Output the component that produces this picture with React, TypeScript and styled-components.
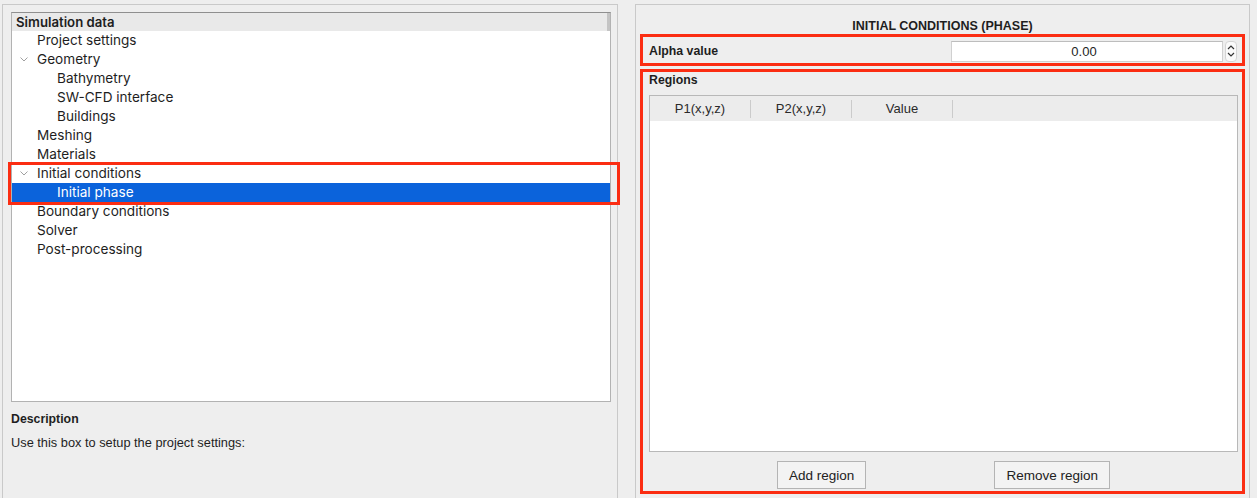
import styled, { createGlobalStyle } from "styled-components";

const GlobalStyle = createGlobalStyle`
  html, body {
    margin: 0;
    height: 498px;
    overflow: hidden;
    background: #eeeeee;
    font-family: "Liberation Sans", Arial, sans-serif;
    color: #1e1e1e;
  }
`;

const Page = styled.div`
  display: flex;
  gap: 17px;
  padding: 4px 0 0 2px;
`;

const LeftPanel = styled.div`
  width: 616px;
  height: 510px;
  box-sizing: border-box;
  border: 1px solid #c9c9c9;
  padding: 7px 6px 0 8px;
`;

const RightPanel = styled.div`
  width: 615px;
  height: 510px;
  box-sizing: border-box;
  border: 1px solid #c9c9c9;
  padding: 13px 4px 0 4px;
  display: flex;
  flex-direction: column;
`;

const TreeBox = styled.div`
  height: 390px;
  box-sizing: border-box;
  background: #ffffff;
  border: 1px solid #b2b2b2;
  border-top-color: #8f8f8f;
  font-family: Inter, "Liberation Sans", sans-serif;
  font-size: 13.6px;
`;

const TreeHeader = styled.div`
  height: 18px;
  line-height: 18px;
  padding-left: 4px;
  background: #e9e9e9;
  font-weight: 600;
  font-size: 13.2px;
  border-right: 3px solid #c4c4c4;
`;

const Row = styled.div<{ level: number; selected?: boolean }>`
  position: relative;
  height: 19px;
  line-height: 19px;
  padding-left: ${({ level }) => (level === 1 ? 25 : 45)}px;
  background: ${({ selected }) => (selected ? "#0b63db" : "transparent")};
  color: ${({ selected }) => (selected ? "#ffffff" : "#1e1e1e")};
`;

const Chevron = styled.svg`
  position: absolute;
  left: 8px;
  top: 7px;
`;

const Highlight = styled.div`
  position: relative;
  &::after {
    content: "";
    position: absolute;
    left: -4px;
    right: -10px;
    top: -2px;
    bottom: -3px;
    border: 3px solid #fb2d12;
    pointer-events: none;
  }
`;

const SectionTitle = styled.div`
  font-size: 12.3px;
  font-weight: bold;
  line-height: 15px;
`;

const RegionsTitle = styled(SectionTitle)`
  margin-top: 1px;
`;

const DescTitle = styled(SectionTitle)`
  margin-top: 10px;
`;

const DescText = styled.div`
  font-size: 12.8px;
  margin-top: 8px;
`;

const PanelTitle = styled.div`
  text-align: center;
  font-size: 12.5px;
  font-weight: bold;
  line-height: 16px;
`;

const RedBox = styled.div`
  box-sizing: border-box;
  border: 3px solid #fb2d12;
`;

const AlphaRow = styled(RedBox)`
  height: 32px;
  display: flex;
  align-items: center;
  padding: 2px 5px 0 6px;
`;

const Label = styled.div`
  flex: 1;
  font-size: 12.3px;
  font-weight: bold;
`;

const SpinInput = styled.div`
  width: 272px;
  height: 21px;
  box-sizing: border-box;
  background: #ffffff;
  border: 1px solid #d0d0d0;
  border-top-color: #bdbdbd;
  text-align: center;
  line-height: 20px;
  font-size: 13px;
  text-indent: -6px;
`;

const SpinButtons = styled.div`
  width: 12px;
  height: 21px;
  margin-left: 2px;
  box-sizing: border-box;
  border: 1px solid #d4d4d4;
  border-radius: 4px;
  background: #fafafa;
  display: flex;
  align-items: center;
  justify-content: center;
`;

const RegionsBox = styled(RedBox)`
  margin-top: 3px;
  height: 425px;
  display: flex;
  flex-direction: column;
  padding: 0 4px 0 6px;
`;

const Table = styled.div`
  margin-top: 7px;
  height: 357px;
  box-sizing: border-box;
  background: #ffffff;
  border: 1px solid #b8b8b8;
`;

const TableHead = styled.div`
  display: flex;
  height: 25px;
  background: #ececec;
  align-items: center;
`;

const HeadCell = styled.div`
  width: 100px;
  height: 18px;
  line-height: 17px;
  text-align: center;
  font-size: 13px;
  border-right: 1px solid #cbcbcb;
  color: #2a2a2a;
`;

const ButtonRow = styled.div`
  display: flex;
  justify-content: space-evenly;
  margin-top: 9px;
`;

const Button = styled.button`
  height: 28px;
  padding: 0 11px;
  font-family: "Liberation Sans", Arial, sans-serif;
  font-size: 13.5px;
  color: #222222;
  background: #f3f3f3;
  border: 1px solid #b4b4b4;
  border-radius: 0;
`;

const ChevronDown = () => (
  <Chevron width="8" height="5" viewBox="0 0 8 5">
    <path d="M0.5 0.5 L4 4 L7.5 0.5" fill="none" stroke="#a0a0a0" strokeWidth="1" />
  </Chevron>
);

const SpinIcon = () => (
  <svg width="8" height="16" viewBox="0 0 8 16">
    <path d="M1 6 L4 3 L7 6" fill="none" stroke="#333" strokeWidth="1.2" />
    <path d="M1 10 L4 13 L7 10" fill="none" stroke="#333" strokeWidth="1.2" />
  </svg>
);

const App = () => {
  return (
    <>
      <GlobalStyle />
      <Page>
        <LeftPanel>
          <TreeBox>
            <TreeHeader>Simulation data</TreeHeader>
            <Row level={1}>Project settings</Row>
            <Row level={1}>
              <ChevronDown />
              Geometry
            </Row>
            <Row level={2}>Bathymetry</Row>
            <Row level={2}>SW-CFD interface</Row>
            <Row level={2}>Buildings</Row>
            <Row level={1}>Meshing</Row>
            <Row level={1}>Materials</Row>
            <Highlight>
              <Row level={1}>
                <ChevronDown />
                Initial conditions
              </Row>
              <Row level={2} selected>
                Initial phase
              </Row>
            </Highlight>
            <Row level={1}>Boundary conditions</Row>
            <Row level={1}>Solver</Row>
            <Row level={1}>Post-processing</Row>
          </TreeBox>
          <DescTitle>Description</DescTitle>
          <DescText>Use this box to setup the project settings:</DescText>
        </LeftPanel>
        <RightPanel>
          <PanelTitle>INITIAL CONDITIONS (PHASE)</PanelTitle>
          <AlphaRow>
            <Label>Alpha value</Label>
            <SpinInput>0.00</SpinInput>
            <SpinButtons>
              <SpinIcon />
            </SpinButtons>
          </AlphaRow>
          <RegionsBox>
            <RegionsTitle>Regions</RegionsTitle>
            <Table>
              <TableHead>
                <HeadCell>P1(x,y,z)</HeadCell>
                <HeadCell>P2(x,y,z)</HeadCell>
                <HeadCell>Value</HeadCell>
              </TableHead>
            </Table>
            <ButtonRow>
              <Button>Add region</Button>
              <Button>Remove region</Button>
            </ButtonRow>
          </RegionsBox>
        </RightPanel>
      </Page>
    </>
  );
};

export default App;
